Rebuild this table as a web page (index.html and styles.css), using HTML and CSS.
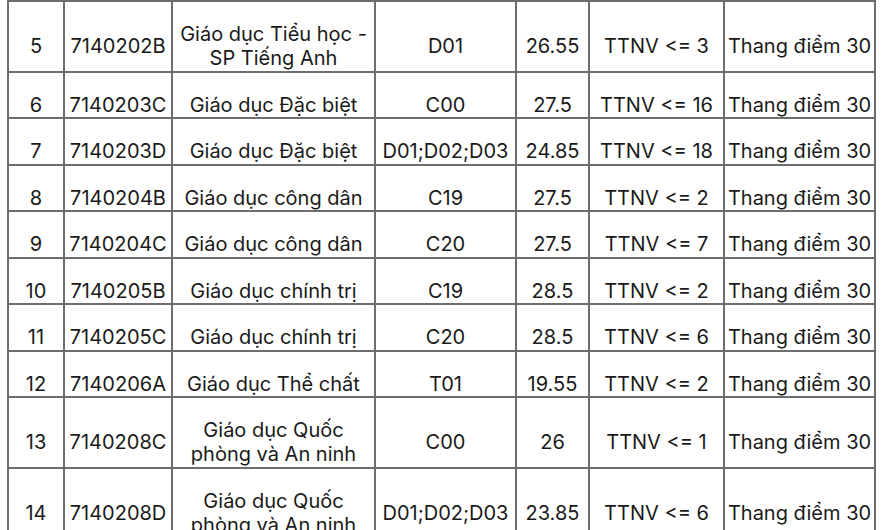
FILE: index.html
```html
<!DOCTYPE html>
<html lang="vi">
<head>
<meta charset="utf-8">
<title>Điểm chuẩn</title>
<link rel="stylesheet" href="styles.css">
</head>
<body>
<table class="scores">
  <colgroup>
    <col class="c-stt"><col class="c-code"><col class="c-name"><col class="c-subj"><col class="c-score"><col class="c-ttnv"><col class="c-note">
  </colgroup>
  <tbody>
    <tr class="tall"><td>5</td><td>7140202B</td><td>Giáo dục Tiểu học -<br>SP Tiếng Anh</td><td>D01</td><td>26.55</td><td>TTNV &lt;= 3</td><td>Thang điểm 30</td></tr>
    <tr><td>6</td><td>7140203C</td><td>Giáo dục Đặc biệt</td><td>C00</td><td>27.5</td><td>TTNV &lt;= 16</td><td>Thang điểm 30</td></tr>
    <tr><td>7</td><td>7140203D</td><td>Giáo dục Đặc biệt</td><td>D01;D02;D03</td><td>24.85</td><td>TTNV &lt;= 18</td><td>Thang điểm 30</td></tr>
    <tr><td>8</td><td>7140204B</td><td>Giáo dục công dân</td><td>C19</td><td>27.5</td><td>TTNV &lt;= 2</td><td>Thang điểm 30</td></tr>
    <tr><td>9</td><td>7140204C</td><td>Giáo dục công dân</td><td>C20</td><td>27.5</td><td>TTNV &lt;= 7</td><td>Thang điểm 30</td></tr>
    <tr><td>10</td><td>7140205B</td><td>Giáo dục chính trị</td><td>C19</td><td>28.5</td><td>TTNV &lt;= 2</td><td>Thang điểm 30</td></tr>
    <tr><td>11</td><td>7140205C</td><td>Giáo dục chính trị</td><td>C20</td><td>28.5</td><td>TTNV &lt;= 6</td><td>Thang điểm 30</td></tr>
    <tr><td>12</td><td>7140206A</td><td>Giáo dục Thể chất</td><td>T01</td><td>19.55</td><td>TTNV &lt;= 2</td><td>Thang điểm 30</td></tr>
    <tr class="tall"><td>13</td><td>7140208C</td><td>Giáo dục Quốc<br>phòng và An ninh</td><td>C00</td><td>26</td><td>TTNV &lt;= 1</td><td>Thang điểm 30</td></tr>
    <tr class="tall"><td>14</td><td>7140208D</td><td>Giáo dục Quốc<br>phòng và An ninh</td><td>D01;D02;D03</td><td>23.85</td><td>TTNV &lt;= 6</td><td>Thang điểm 30</td></tr>
  </tbody>
</table>
</body>
</html>
```

FILE: styles.css
```css
html, body {
  margin: 0;
  padding: 0;
  background: #ffffff;
}

body {
  padding: 0 0 0 7px;
  font-family: "Inter", "Noto Sans", sans-serif;
  color: #1a1a1a;
  overflow: hidden;
}

.scores {
  border-collapse: collapse;
  table-layout: fixed;
  width: 869px;
  font-size: 20px;
  line-height: 24px;
}

.c-stt { width: 56px; }
.c-code { width: 108px; }
.c-name { width: 203px; }
.c-subj { width: 141px; }
.c-score { width: 73px; }
.c-ttnv { width: 135px; }
.c-note { width: 151px; }

.scores td {
  border: 2px solid #6e6e6e;
  padding: 20px 0 0.5px;
  text-align: center;
  vertical-align: middle;
  white-space: nowrap;
}
```
